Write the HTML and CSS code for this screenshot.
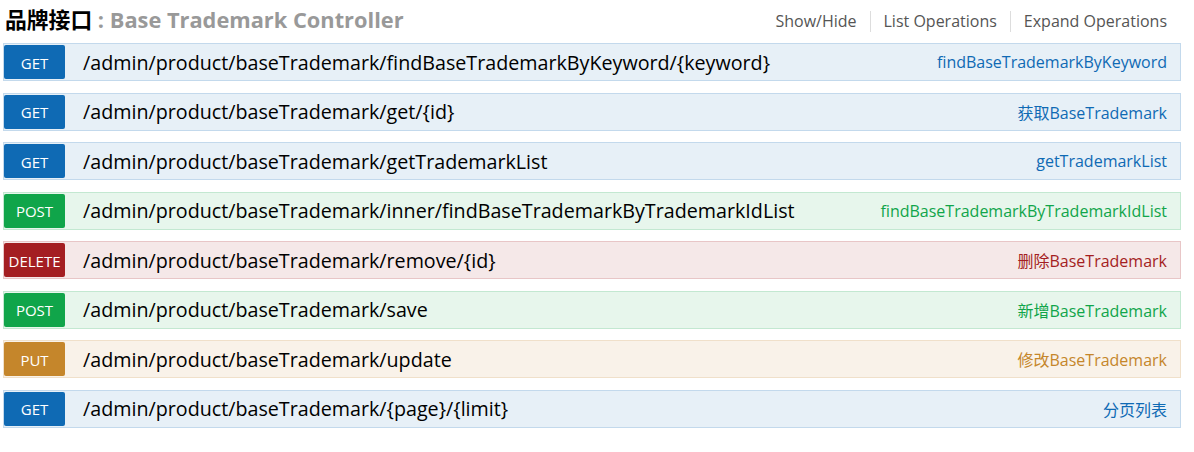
FILE: index.html
```html
<!DOCTYPE html>
<html lang="zh">
<head>
<meta charset="utf-8">
<title>Base Trademark Controller</title>
<link rel="stylesheet" href="styles.css">
</head>
<body>
<div class="resource">
  <div class="heading">
    <h2 class="title"><span class="cn">品牌接口</span><span class="desc">&nbsp;: Base Trademark Controller</span></h2>
    <ul class="options">
      <li>Show/Hide</li>
      <li>List Operations</li>
      <li>Expand Operations</li>
    </ul>
  </div>
  <ul class="endpoints">
    <li class="op get"><span class="method">GET</span><span class="path">/admin/product/baseTrademark/findBaseTrademarkByKeyword/{keyword}</span><span class="summary">findBaseTrademarkByKeyword</span></li>
    <li class="op get"><span class="method">GET</span><span class="path">/admin/product/baseTrademark/get/{id}</span><span class="summary">获取BaseTrademark</span></li>
    <li class="op get"><span class="method">GET</span><span class="path">/admin/product/baseTrademark/getTrademarkList</span><span class="summary">getTrademarkList</span></li>
    <li class="op post"><span class="method">POST</span><span class="path">/admin/product/baseTrademark/inner/findBaseTrademarkByTrademarkIdList</span><span class="summary">findBaseTrademarkByTrademarkIdList</span></li>
    <li class="op delete"><span class="method">DELETE</span><span class="path">/admin/product/baseTrademark/remove/{id}</span><span class="summary">删除BaseTrademark</span></li>
    <li class="op post"><span class="method">POST</span><span class="path">/admin/product/baseTrademark/save</span><span class="summary">新增BaseTrademark</span></li>
    <li class="op put"><span class="method">PUT</span><span class="path">/admin/product/baseTrademark/update</span><span class="summary">修改BaseTrademark</span></li>
    <li class="op get"><span class="method">GET</span><span class="path">/admin/product/baseTrademark/{page}/{limit}</span><span class="summary">分页列表</span></li>
  </ul>
</div>
</body>
</html>
```

FILE: styles.css
```css
* { box-sizing: border-box; }
html, body { margin: 0; padding: 0; background: #fff; }
body {
  font-family: "Open Sans", "Noto Sans CJK SC", sans-serif;
  color: #000;
}
.resource { padding: 0 13px 0 3px; }
.heading {
  display: flex;
  align-items: center;
  justify-content: space-between;
  height: 43px;
  padding-bottom: 4px;
}
.title {
  margin: 0 0 0 2px;
  font-size: 21.8px;
  font-weight: bold;
  line-height: 1;
}
.title .cn { color: #000; }
.title .desc { color: #999; }
.options {
  list-style: none;
  margin: 4px 14px 0 0;
  padding: 0;
  display: flex;
  align-items: center;
  font-size: 16px;
  color: #555;
}
.options li {
  padding: 0 13px;
  border-left: 1px solid #ddd;
  line-height: 21px;
}
.options li:first-child { border-left: 0; }
.options li:last-child { padding-right: 0; }
.endpoints { list-style: none; margin: 0; padding: 0; }
.op {
  display: flex;
  align-items: center;
  height: 38px;
  border: 1px solid;
  margin-bottom: 11.5px;
  padding: 1px 0;
}
.method {
  width: 61px;
  height: 34px;
  border-radius: 2px;
  color: #fff;
  font-size: 15px;
  padding-top: 1px;
  display: flex;
  align-items: center;
  justify-content: center;
  text-transform: uppercase;
  flex: none;
}
.path {
  margin-left: 18px;
  font-size: 19.7px;
  color: #000;
  flex: 1;
  white-space: nowrap;
}
.summary {
  font-size: 16px;
  padding-right: 13px;
  white-space: nowrap;
}
.get { background: #e7f0f7; border-color: #c3d9ec; }
.get .method { background: #0f6ab4; }
.get .summary { color: #0f6ab4; }
.post { background: #e7f6ec; border-color: #c3e8d1; }
.post .method { background: #10a54a; }
.post .summary { color: #10a54a; }
.delete { background: #f5e8e8; border-color: #e8c6c7; }
.delete .method { background: #a41e22; }
.delete .summary { color: #a41e22; }
.put { background: #f9f2e9; border-color: #f0e0ca; }
.put .method { background: #c5862b; }
.put .summary { color: #c5862b; }
```
